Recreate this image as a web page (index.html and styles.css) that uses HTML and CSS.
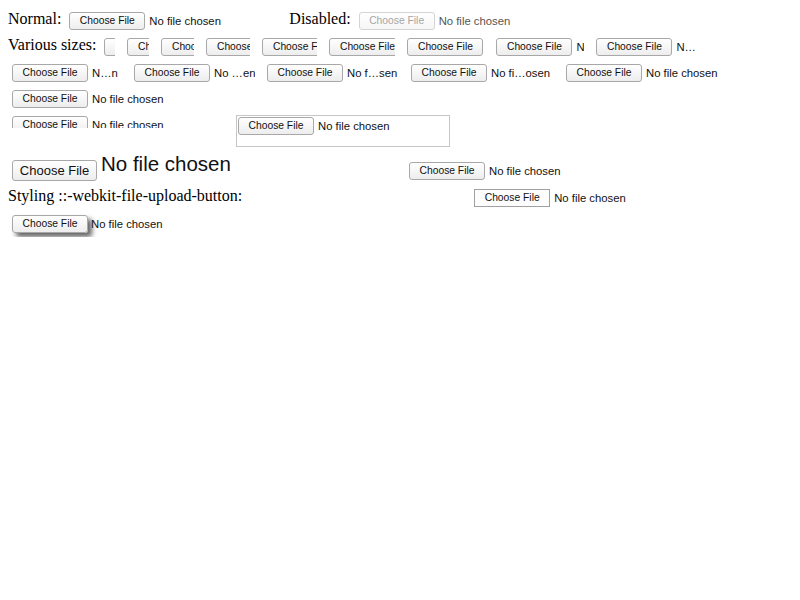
FILE: index.html
```html
<!DOCTYPE html>
<html>
<head>
<meta charset="utf-8">
<link rel="stylesheet" href="styles.css">
</head>
<body>
<div class="row">
  <span class="lbl">Normal:</span>
  <span class="fi w212"><span class="fb">Choose File</span><span class="ft">No file chosen</span></span>
  <span class="lbl">Disabled:</span>
  <span class="fi w212 dis"><span class="fb">Choose File</span><span class="ft">No file chosen</span></span>
</div>
<div class="row wrap">
  <span class="lbl">Various sizes:</span>
  <span class="fi s1"><span class="fb">Choose File</span><span class="ft"></span></span>
  <span class="fi s2"><span class="fb">Choose File</span><span class="ft"></span></span>
  <span class="fi s3"><span class="fb">Choose File</span><span class="ft"></span></span>
  <span class="fi s4"><span class="fb">Choose File</span><span class="ft"></span></span>
  <span class="fi s5"><span class="fb">Choose File</span><span class="ft"></span></span>
  <span class="fi s6"><span class="fb">Choose File</span><span class="ft"></span></span>
  <span class="fi s7"><span class="fb">Choose File</span><span class="ft"></span></span>
  <span class="fi s8"><span class="fb">Choose File</span><span class="ft">N</span></span>
  <span class="fi s9"><span class="fb">Choose File</span><span class="ft">N…</span></span>
  <span class="fi s10"><span class="fb">Choose File</span><span class="ft">N…n</span></span>
  <span class="fi s11"><span class="fb">Choose File</span><span class="ft">No …en</span></span>
  <span class="fi s12"><span class="fb">Choose File</span><span class="ft">No f…sen</span></span>
  <span class="fi s13"><span class="fb">Choose File</span><span class="ft">No fi…osen</span></span>
  <span class="fi s14"><span class="fb">Choose File</span><span class="ft">No file chosen</span></span>
  <span class="fi s15"><span class="fb">Choose File</span><span class="ft">No file chosen</span></span>
</div>
<div class="row top">
  <span class="fi w212 clip"><span class="fb">Choose File</span><span class="ft">No file chosen</span></span>
  <span class="fi boxed"><span class="fb">Choose File</span><span class="ft">No file chosen</span></span>
</div>
<div class="row top">
  <span class="fi big"><span class="fb">Choose File</span><span class="ft">No file chosen</span></span>
  <span class="fi w212 low"><span class="fb">Choose File</span><span class="ft">No file chosen</span></span>
</div>
<div class="row">
  <span class="lbl">Styling ::-webkit-file-upload-button:</span>
  <span class="fi w212 ghost"><span class="fb">Choose File</span><span class="ft">No file chosen</span></span>
  <span class="fi w212 sq"><span class="fb">Choose File</span><span class="ft">No file chosen</span></span>
</div>
<div class="row">
  <span class="fi w212 shadow"><span class="fb">Choose File</span><span class="ft">No file chosen</span></span>
</div>
</body>
</html>
```

FILE: styles.css
```css
body {
  margin: 8px;
  font-family: "Liberation Serif", "Times New Roman", serif;
  font-size: 16px;
  color: #000;
  background: #fff;
}

.row {
  display: flex;
  align-items: baseline;
  column-gap: 4px;
}

.wrap {
  flex-wrap: wrap;
}

.top {
  align-items: flex-start;
}

.lbl {
  flex: none;
  white-space: nowrap;
}

.fi {
  display: inline-flex;
  align-items: center;
  flex: none;
  height: 18px;
  margin: 4px;
  overflow: hidden;
  white-space: nowrap;
  font-family: "Liberation Sans", Arial, sans-serif;
}

.fb {
  flex: none;
  box-sizing: border-box;
  width: 76px;
  height: 18px;
  border: 1px solid #a8a8a8;
  border-radius: 3px;
  background: linear-gradient(#ffffff, #ededed);
  font-size: 10.3px;
  line-height: 16px;
  text-align: center;
  color: #111;
}

.ft {
  flex: none;
  margin-left: 4px;
  font-size: 11.3px;
  line-height: 18px;
  color: #111;
}

.w212 { width: 212px; }
.s1 { width: 11px; }
.s2 { width: 22px; }
.s3 { width: 33px; }
.s4 { width: 44px; }
.s5 { width: 55px; }
.s6 { width: 66px; }
.s7 { width: 77px; }
.s8 { width: 88px; }
.s9 { width: 99px; }
.s10 { width: 110px; }
.s11 { width: 121px; }
.s12 { width: 132px; }
.s13 { width: 143px; }
.s14 { width: 154px; }
.s15 { width: 165px; }

.dis .fb {
  color: #a6a6a6;
  border-color: #d4d4d4;
  background: linear-gradient(#ffffff, #f6f6f6);
}

.dis .ft {
  color: #555;
}

.clip {
  height: 12px;
  align-items: flex-start;
}

.boxed {
  box-sizing: border-box;
  width: 214px;
  height: 32px;
  margin: 3px 4px 5px;
  padding: 1px;
  border: 1px solid #c6c6c6;
  align-items: flex-start;
}

.big {
  width: 385px;
  height: 25px;
  align-items: flex-start;
  overflow: visible;
}

.big .fb {
  width: 85px;
  height: 21px;
  margin-top: 4px;
  font-size: 13px;
  line-height: 19px;
}

.big .ft {
  font-size: 20.5px;
  line-height: 16px;
}

.low {
  margin-top: 10px;
}

.ghost {
  visibility: hidden;
}

.sq .fb {
  border-radius: 0;
  border-color: #a0a0a0;
  background: #fdfdfd;
}

.shadow {
  overflow: visible;
}

.shadow .fb {
  box-shadow: 4px 4px 5px rgba(0, 0, 0, 0.6);
}

.shadow .ft {
  margin-left: 3px;
}
```
